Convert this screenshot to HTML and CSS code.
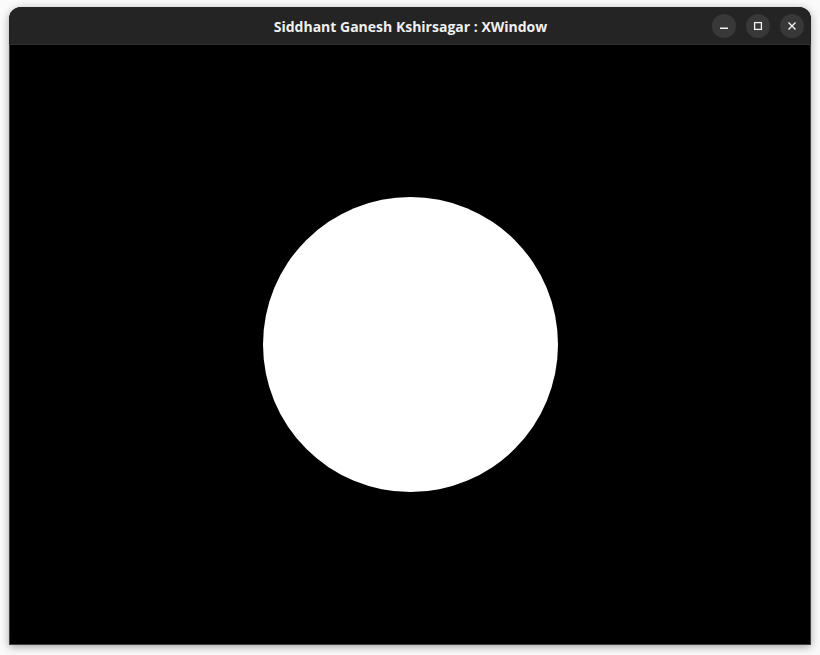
FILE: index.html
```html
<!DOCTYPE html>
<html>
<head>
<meta charset="utf-8">
<link rel="stylesheet" href="styles.css">
</head>
<body>
<div class="window">
  <div class="titlebar">
    <div class="title">Siddhant Ganesh Kshirsagar : XWindow</div>
    <div class="controls">
      <div class="btn">
        <svg width="24" height="24" viewBox="0 0 24 24"><rect x="8" y="13.5" width="8" height="1.5" fill="#f2f2f2"/></svg>
      </div>
      <div class="btn">
        <svg width="24" height="24" viewBox="0 0 24 24"><rect x="8.6" y="8.6" width="6.8" height="6.8" fill="none" stroke="#f2f2f2" stroke-width="1.3"/></svg>
      </div>
      <div class="btn">
        <svg width="24" height="24" viewBox="0 0 24 24"><path d="M8.5 8.5 L15.5 15.5 M15.5 8.5 L8.5 15.5" stroke="#f2f2f2" stroke-width="1.4" fill="none"/></svg>
      </div>
    </div>
  </div>
  <div class="content">
    <div class="circle"></div>
  </div>
</div>
</body>
</html>
```
FILE: styles.css
```css
html, body {
  margin: 0;
  padding: 0;
  width: 820px;
  height: 655px;
  background: #fafafa;
  overflow: hidden;
}
body {
  padding: 7px 9px 0 9px;
  box-sizing: border-box;
}
.window {
  width: 802px;
  height: 638px;
  border-radius: 12px 12px 0 0;
  background: #242424;
  box-shadow: 0 2px 8px rgba(0,0,0,0.35);
  display: flex;
  flex-direction: column;
  overflow: hidden;
}
.titlebar {
  height: 37px;
  flex: none;
  position: relative;
  display: flex;
  align-items: center;
  justify-content: center;
  background: #242424;
  border-bottom: 1px solid #303030;
}
.title {
  font-family: "Open Sans", "DejaVu Sans", sans-serif;
  font-weight: 700;
  font-size: 14px;
  color: #f0f0f0;
  padding-top: 2px;
  padding-left: 1px;
}
.controls {
  position: absolute;
  right: 7px;
  top: 7px;
  display: flex;
  gap: 10px;
}
.btn {
  width: 24px;
  height: 24px;
  border-radius: 50%;
  background: #383838;
  display: flex;
}
.content {
  flex: 1;
  background: #000;
  border: 1px solid #3c3c3c;
  border-top: none;
  display: flex;
  align-items: center;
  justify-content: center;
}
.circle {
  width: 295px;
  height: 295px;
  border-radius: 50%;
  background: #fff;
}
```
